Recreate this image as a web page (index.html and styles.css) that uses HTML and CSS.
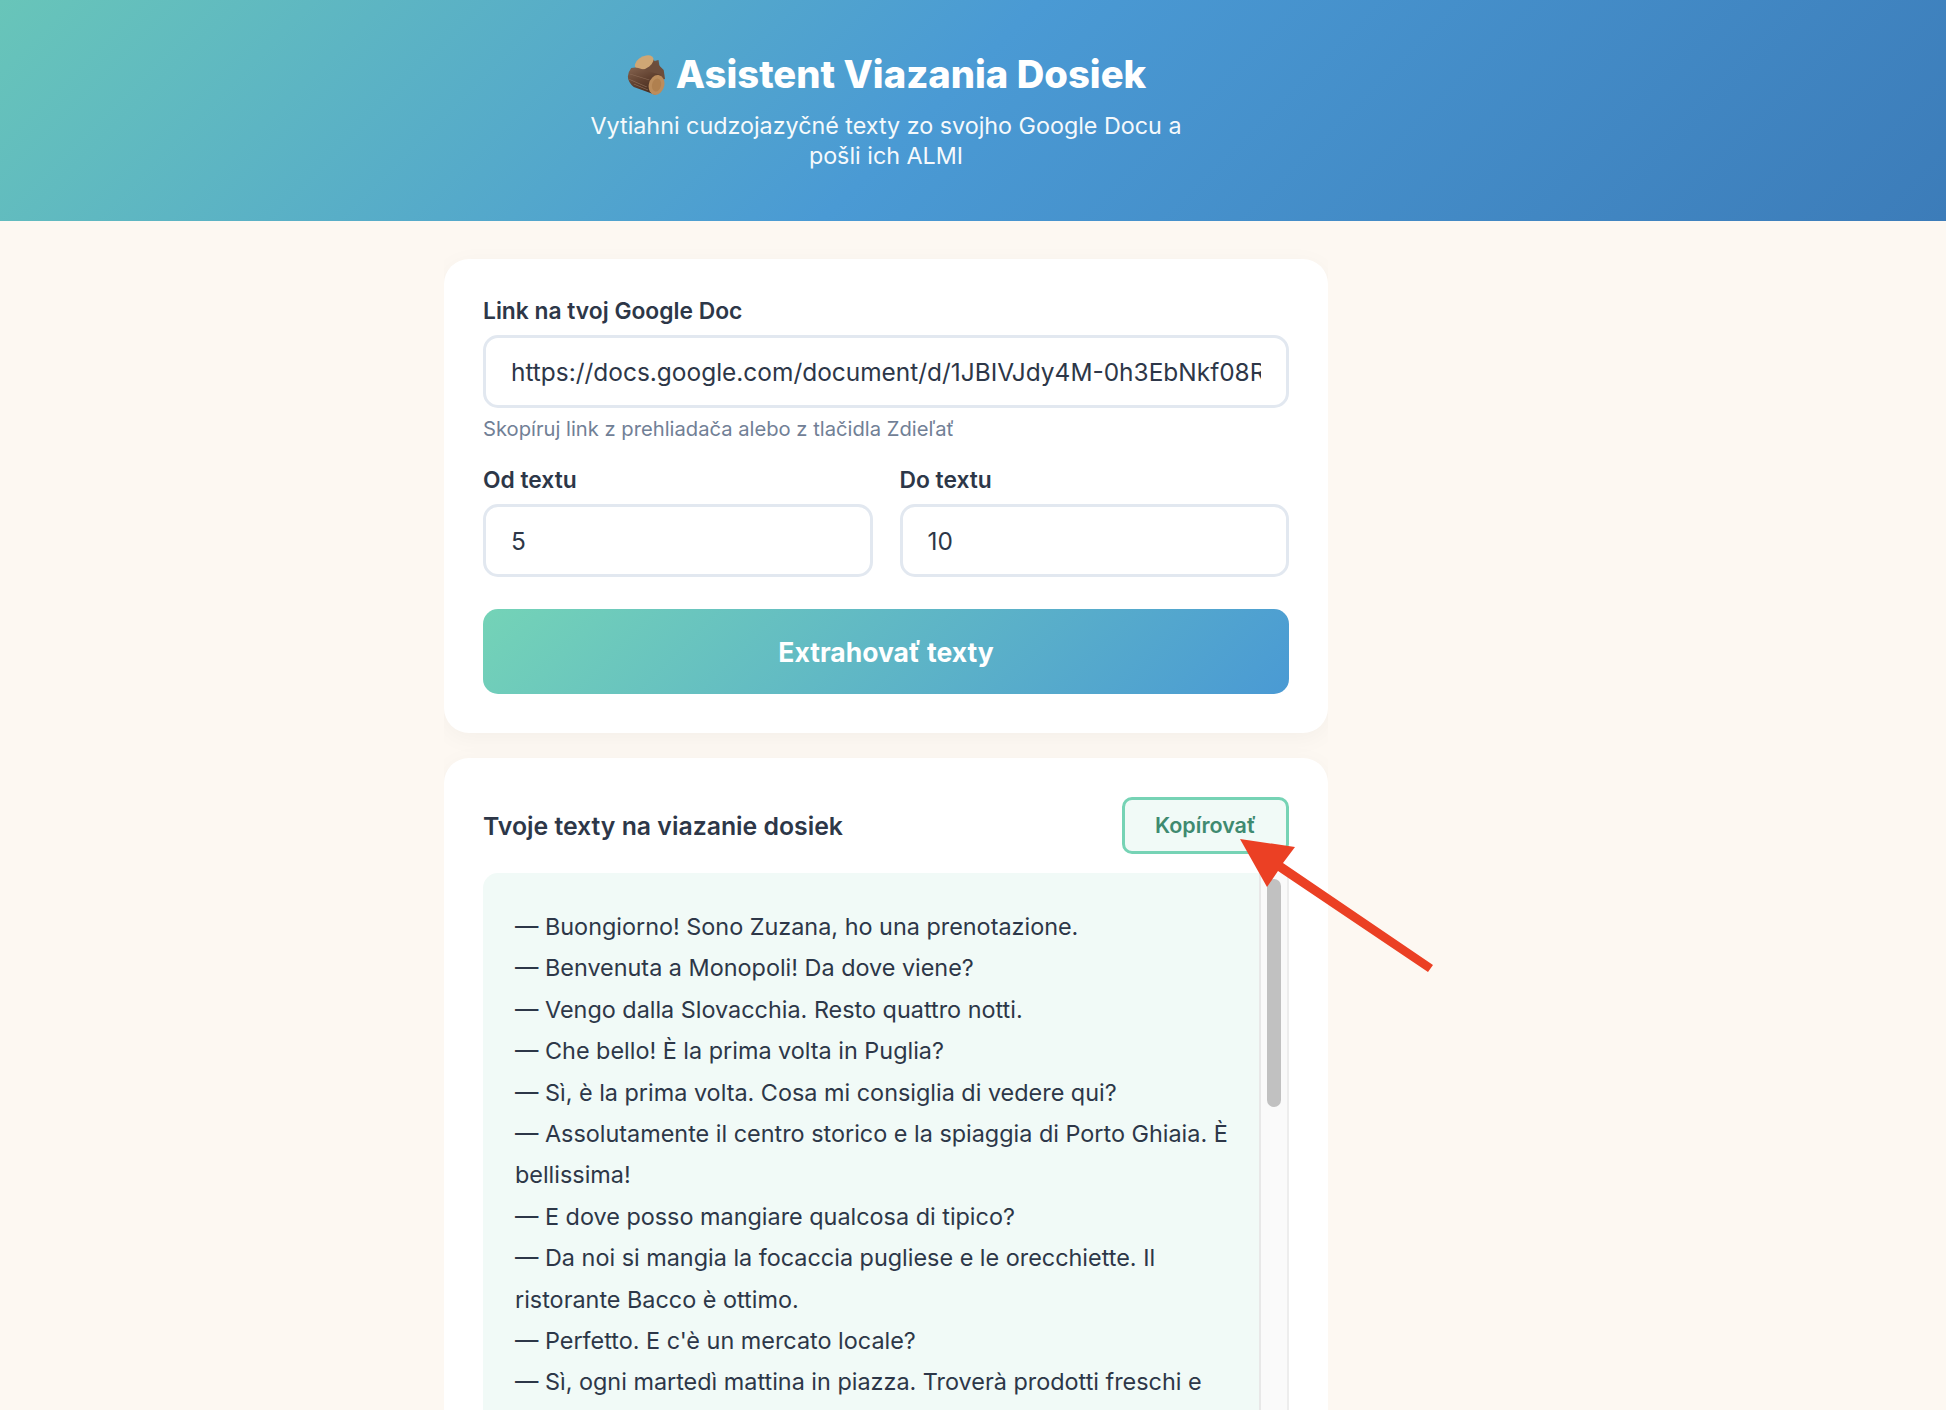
FILE: index.html
```html
<!DOCTYPE html>
<html lang="sk">
<head>
    <meta charset="UTF-8">
    <meta name="viewport" content="width=device-width, initial-scale=1.0">
    <title>Asistent Viazania Dosiek</title>
    <link rel="stylesheet" href="styles.css">
</head>
<body>
    <header class="hero">
        <h1 class="hero-title">
            <svg class="log-icon" viewBox="0 0 30 41" preserveAspectRatio="none" aria-hidden="true">
                <defs>
                    <linearGradient id="bark" x1="0.1" y1="0.1" x2="0.6" y2="1">
                        <stop offset="0" stop-color="#7d5c48"/>
                        <stop offset="0.5" stop-color="#5f3f2e"/>
                        <stop offset="1" stop-color="#452c20"/>
                    </linearGradient>
                </defs>
                <!-- back log -->
                <path d="M22 7 L25 6 L26 14 Z" fill="#6b5142"/>
                <path d="M8 14 L19 3 L29 16 L30 25 L20 28 Z" fill="#6d4d3b"/>
                <ellipse cx="14" cy="8.5" rx="8.5" ry="5.5" transform="rotate(-45 14 8.5)" fill="#cfa775"/>
                <!-- front log -->
                <path d="M4 14 Q8 12.500 12 15 L27 21 L23 41 L6 33 Q-2 24 4 14 Z" fill="url(#bark)"/>
                <path d="M3 20 L18 26 M2 25 L16 33 M6 30 L17 36" stroke="#8a6a55" stroke-width="0.8" fill="none"/>
                <ellipse cx="23.500" cy="31" rx="6" ry="10" transform="rotate(8 23.500 31)" fill="#bc8d5c"/>
                <ellipse cx="23.500" cy="31" rx="3.500" ry="6.500" transform="rotate(8 23.500 31)" fill="#b0804f"/>
            </svg>
            Asistent Viazania Dosiek
        </h1>
        <p class="hero-sub">Vytiahni cudzojazyčné texty zo svojho Google Docu a pošli ich ALMI</p>
    </header>

    <main class="content">
        <section class="card">
            <label class="field-label" for="doc-link">Link na tvoj Google Doc</label>
            <input class="text-input" id="doc-link" type="text" value="https://docs.google.com/document/d/1JBIVJdy4M-0h3EbNkf08RmT7xQ2vLs9/edit">
            <p class="hint">Skopíruj link z prehliadača alebo z tlačidla Zdieľať</p>

            <div class="range-row">
                <div class="range-field">
                    <label class="field-label" for="from">Od textu</label>
                    <input class="text-input" id="from" type="text" value="5">
                </div>
                <div class="range-field">
                    <label class="field-label" for="to">Do textu</label>
                    <input class="text-input" id="to" type="text" value="10">
                </div>
            </div>

            <button class="extract-btn">Extrahovať texty</button>
        </section>

        <section class="card">
            <div class="result-head">
                <h2 class="result-title">Tvoje texty na viazanie dosiek</h2>
                <button class="copy-btn">Kopírovať</button>
            </div>
            <div class="result-box">
                <div class="result-text">— Buongiorno! Sono Zuzana, ho una prenotazione.
— Benvenuta a Monopoli! Da dove viene?
— Vengo dalla Slovacchia. Resto quattro notti.
— Che bello! È la prima volta in Puglia?
— Sì, è la prima volta. Cosa mi consiglia di vedere qui?
— Assolutamente il centro storico e la spiaggia di Porto Ghiaia. È bellissima!
— E dove posso mangiare qualcosa di tipico?
— Da noi si mangia la focaccia pugliese e le orecchiette. Il ristorante Bacco è ottimo.
— Perfetto. E c'è un mercato locale?
— Sì, ogni martedì mattina in piazza. Troverà prodotti freschi e</div>
                <div class="scroll-track"><div class="scroll-thumb"></div></div>
            </div>
        </section>
    </main>

    <!-- red annotation arrow drawn over the screenshot -->
    <svg class="annotation" viewBox="0 0 1946 1410" aria-hidden="true">
        <polygon points="1240,839 1295,847 1283,863 1433,965 1428,972 1278,871 1267,887" fill="#eb4024"/>
    </svg>
</body>
</html>
```

FILE: styles.css
```css
* {
    box-sizing: border-box;
}

html, body {
    height: 100%;
}

body {
    margin: 0;
    overflow: hidden;
    background-color: #fdf8f2;
    font-family: 'Inter', 'Liberation Sans', sans-serif;
    color: #2d3748;
}

.hero {
    height: 221px;
    padding: 50px 174px 0 0;
    background: linear-gradient(135deg, #68c5b9 0%, #4a9ad4 48%, #3c7cb9 100%);
    color: white;
    text-align: center;
}

.hero-title {
    display: flex;
    justify-content: center;
    align-items: center;
    gap: 11px;
    margin: 0;
    font-size: 38.2px;
    font-weight: 800;
    line-height: 48px;
}

.log-icon {
    width: 39px;
    height: 41px;
}

.hero-sub {
    width: 600px;
    margin: 13px auto 0;
    font-size: 23.3px;
    line-height: 29.6px;
    opacity: 0.95;
}

.content {
    display: flex;
    flex-direction: column;
    gap: 25px;
    width: 884px;
    height: 1189px;
    margin-left: 444px;
    padding-top: 38px;
    overflow: hidden;
}

.card {
    flex-shrink: 0;
    padding: 39px;
    background: white;
    border-radius: 25px;
    box-shadow: 0 5px 25px rgba(0, 0, 0, 0.04);
}

.field-label {
    display: block;
    margin-bottom: 11px;
    font-size: 22.8px;
    font-weight: 600;
    line-height: 26px;
}

.text-input {
    display: block;
    width: 100%;
    height: 73px;
    padding: 0 25px;
    border: 3px solid #e2e8f0;
    border-radius: 15px;
    background: white;
    font-family: inherit;
    font-size: 24.45px;
    color: #2d3748;
}

.hint {
    margin: 9px 0 0;
    font-size: 20.2px;
    line-height: 24px;
    color: #718096;
}

.range-row {
    display: grid;
    grid-template-columns: 1fr 1fr;
    gap: 27px;
    margin-top: 26px;
}

.extract-btn {
    display: block;
    width: 100%;
    height: 85px;
    margin-top: 32px;
    border: 0;
    border-radius: 15px;
    background: linear-gradient(135deg, #74d3b7, #4a9ad4);
    font-family: inherit;
    font-size: 26.5px;
    font-weight: 700;
    color: white;
}

.result-head {
    display: flex;
    justify-content: space-between;
    align-items: center;
    margin-bottom: 19px;
}

.result-title {
    margin: 0;
    font-size: 24.8px;
    font-weight: 600;
}

.copy-btn {
    width: 167px;
    height: 57px;
    padding: 0 0 2px;
    border: 3px solid #76d3b5;
    border-radius: 10px;
    background: #f1faf7;
    font-family: inherit;
    font-size: 21.5px;
    font-weight: 600;
    color: #3f8a70;
}

.result-box {
    display: flex;
    height: 744px;
    background: #f1faf7;
    border-top-left-radius: 15px;
}

.result-text {
    flex: 1;
    padding: 33px 22px 0 32px;
    font-size: 23.4px;
    line-height: 41.4px;
    white-space: pre-wrap;
}

.scroll-track {
    width: 30px;
    padding: 6px 6px 0;
    background: #fafafa;
    border-left: 2px solid #e8e8e8;
    border-right: 2px solid #ededed;
}

.scroll-thumb {
    height: 228px;
    border-radius: 8px;
    background: #c1c1c1;
}

.annotation {
    position: absolute;
    top: 0;
    left: 0;
    width: 1946px;
    height: 1410px;
    pointer-events: none;
}
```
